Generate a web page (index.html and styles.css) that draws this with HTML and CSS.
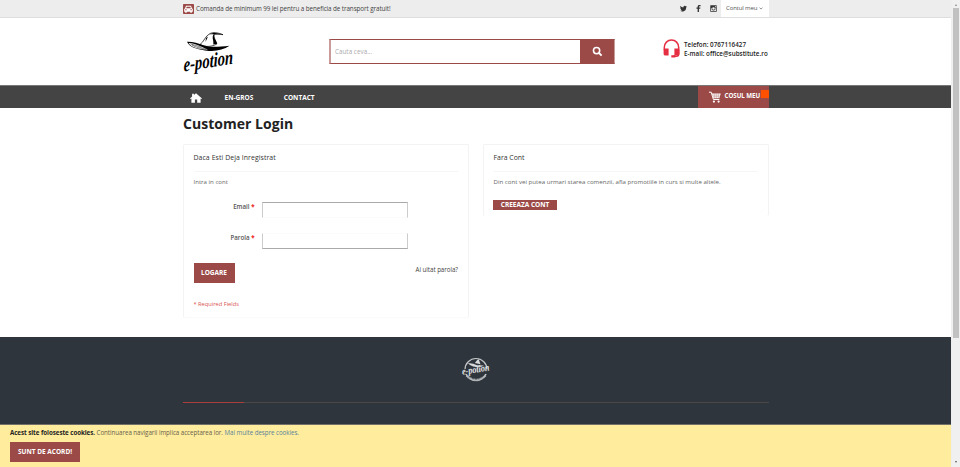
FILE: index.html
```html
<!DOCTYPE html>
<html lang="ro">
<head>
<meta charset="utf-8">
<title>Customer Login</title>
<link rel="stylesheet" href="styles.css">
</head>
<body>
<div class="page">
  <div class="topbar"><div class="wrap topbar-in">
    <svg class="car" viewBox="0 0 11 10"><rect width="11" height="10" rx=".7" fill="#9b4a48"/><path d="M1.200 5 2.100 4.200 3 1.800h5l.9 2.400.9.800v2.700H8.800v1H7.300v-1H3.700v1H2.200v-1h-1z" fill="#fff"/><path d="M3.100 4.200 3.700 2.800h3.600l.6 1.400zM2.200 5.300h1.400v.9H2.200zm5.200 0h1.400v.9H7.400z" fill="#9b4a48"/></svg>
    <span class="promo">Comanda de minimum 99 lei pentru a beneficia de transport gratuit!</span>
    <div class="social">
      <svg viewBox="0 0 24 24"><path d="M23.600 4.900a10 10 0 0 1-2.800.8 4.800 4.800 0 0 0 2.100-2.700 10 10 0 0 1-3 1.200 4.900 4.900 0 0 0-8.400 4.400A13.900 13.900 0 0 1 1.400 3.500a4.900 4.900 0 0 0 1.500 6.600 5 5 0 0 1-2.200-.6 4.900 4.900 0 0 0 3.900 4.900 5 5 0 0 1-2.200.1 4.900 4.900 0 0 0 4.600 3.400A9.900 9.900 0 0 1 0 20a14 14 0 0 0 21.500-12.400 10 10 0 0 0 2.100-2.700z"/></svg>
      <svg viewBox="0 0 24 24"><path d="M9 24V13H5V8.800H9V6c0-4 2.200-6 5.700-6H19v4h-3.300c-1.700 0-2.100.8-2.100 2v2.800h4.800l-.6 4.200h-4.200v11z"/></svg>
      <svg viewBox="0 0 24 24"><path fill-rule="evenodd" d="M2 1h20q1 0 1 1v20q0 1-1 1H2q-1 0-1-1V2q0-1 1-1zm15 3v4h4V4zM3.500 10.500V20.500h17V10.500h-2.200a6.500 6.500 0 1 1-12.600 0zM12 7.500a4.500 4.500 0 1 0 0 9 4.500 4.500 0 0 0 0-9z"/></svg>
    </div>
    <div class="account">Contul meu <svg viewBox="0 0 6 4"><path d="M.8.8 3 2.800 5.200.8" fill="none" stroke="#777" stroke-width="1.200"/></svg></div>
  </div></div>

  <header class="wrap header">
    <svg class="logo" viewBox="0 0 52 44">
      <path d="M17 12.500C21 10 22 4 27 1.500c3-1.500 8-1 13 1.200-4-1-7.500-.9-8.800-.2-.7 3.300 1.700 6.200 2.700 9.500-5 2.700-11 3.500-16.900.5z" fill="#fff" stroke="#000" stroke-width=".7"/>
      <path d="M30.500 2.500c-2 3 .5 6-.2 10l3.800-.8C33 8 30 5.500 31.200 2.500zM26 2.200l5-1.500 8 1.700-8-.2zM25 4.500l-2.500 5.500.5-4z" fill="#000"/>
      <path d="M4 9.800C9 9.500 15 11.200 21 13.400c5 1.800 13 1.700 25.500.4C41 17.300 34 19.500 26 18.900 15 18 6.500 15.500 4 9.800z" fill="#000"/>
      <path d="M5.500 10.900c4 .2 8 1.400 12 3.300 3 1.500 4.500 2.300 7.500 3.200C17.500 17.300 8.500 16 5.500 10.900z" fill="#fff"/>
      <path d="M9 13c4 2.500 9 3.300 14 4M7.500 12c4 1 8 2 11 3.500" fill="none" stroke="#000" stroke-width=".5"/>
      <text transform="translate(.8 39.500) rotate(-9) skewX(-8)" font-size="20" textLength="50" lengthAdjust="spacingAndGlyphs" class="script">e-potion</text>
    </svg>
    <form class="search"><input placeholder="Cauta ceva..." aria-label="Cauta"><span class="search-btn"><svg viewBox="0 0 12 12"><circle cx="5" cy="5" r="3.400" fill="none" stroke="#fff" stroke-width="1.700"/><path d="m7.500 7.500 3 3" stroke="#fff" stroke-width="2.200"/></svg></span></form>
    <div class="contact">
      <svg viewBox="0 0 17 19"><path d="M1.300 11V8.600C1.300 4 4.500 1.100 8.500 1.100s7.200 2.900 7.200 7.500V15q0 2.200-2.200 2.200H10" fill="none" stroke="#e62e42" stroke-width="1.500"/><path d="M.6 11q0-1.400 1.400-1.400h3.600v7H2.500Q.6 16.600.6 15zM11.400 9.600H15q1.400 0 1.400 1.400v4q0 1.600-1.900 1.600h-3.100zM8.300 16.200h4v2.200h-4z" fill="#e62e42"/></svg>
      <div>Telefon: 0767116427<br>E-mail: office@substitute.ro</div>
    </div>
  </header>

  <nav class="nav"><div class="wrap nav-in">
    <svg class="home" viewBox="0 0 12 10"><path d="M6 .2 12 5.500l-.6.6-.8-.5V9.800H7.200V6.500H4.900v3.300H1.400V5.600l-.7.500L0 5.500 2.100 3.500V.8h1.800v1.200z" fill="#fff"/></svg>
    <a class="gros">EN-GROS</a><a class="ct">CONTACT</a>
    <div class="cart"><svg viewBox="0 0 12 12"><path d="M0 1.200h2.200L4.400 8.500h6" fill="none" stroke="#fff" stroke-width="1"/><path d="M2.700 2.500h9L10.400 7.200H4.200z" fill="#fff"/><path d="M3 4.100h8M3.600 5.700h7M5.300 2.500v4.700M7.300 2.500v4.700M9.300 2.500v4.700" stroke="#9b4a48" stroke-width=".3"/><circle cx="4.900" cy="10.600" r="1.100" fill="#fff"/><circle cx="9.600" cy="10.600" r="1.100" fill="#fff"/></svg><span>COSUL MEU</span><i class="badge"></i></div>
  </div></nav>

  <main class="wrap main">
    <h1>Customer Login</h1>
    <div class="cards">
      <section class="card login">
        <h2><span class="t-old">Daca Esti Deja Inregistrat</span></h2>
        <p>Intra in cont</p>
        <div class="field email"><label>Email <b>*</b></label><input aria-label="Email"></div>
        <div class="field pass"><label>Parola <b>*</b></label><input type="password" aria-label="Parola"></div>
        <div class="actions"><button class="btn">LOGARE</button><a>Ai uitat parola?</a></div>
        <div class="req">* Required Fields</div>
      </section>
      <section class="card new">
        <h2>Fara Cont</h2>
        <p><span class="t-new">Din cont vei putea urmari starea comenzii, afla promotiile in curs si multe altele.</span></p>
        <a class="create">CREEAZA CONT</a>
      </section>
    </div>
  </main>

  <footer class="footer"><div class="wrap">
    <svg class="seal" viewBox="0 0 28 28"><circle cx="14" cy="13.500" r="11" fill="none" stroke="#c5c8ca" stroke-width="1.200"/><path d="M4.500 19.500q9.500 9 19 0" fill="none" stroke="#a6abaf" stroke-width="2.400" stroke-dasharray="1.200 .5"/><path d="M1 13h26v5H1z" fill="#2f353c"/><path d="M6 7q6 .5 9 2.200l7 .2q-3 2-8 1.600-6-.8-8-4zM13 7q2-4 5-3.800l-1 1 1.500 4z" fill="#d8dadb"/><text transform="translate(.5 18.800) rotate(-9)" font-size="10" textLength="27.500" lengthAdjust="spacingAndGlyphs" class="script light">e-potion</text></svg>
    <div class="rule"><span></span></div>
  </div></footer>

  <div class="cookie">
    <div class="cookie-text"><b>Acest site foloseste cookies.</b> <span>Continuarea navigarii implica acceptarea lor.</span> <a>Mai multe despre cookies.</a></div>
    <button class="btn">SUNT DE ACORD!</button>
  </div>
</div>
<div class="scroll"><span class="arrow up"></span><span class="thumb"></span><span class="arrow down"></span></div>
</body>
</html>
```

FILE: styles.css
```css
* { box-sizing: border-box; }
body { margin: 0; display: flex; height: 467px; overflow: hidden; background: #fff; color: #555; font: 6.2px/9px "Open Sans", sans-serif; }
svg { display: block; flex: none; }
.page { width: 952px; height: 467px; display: flex; flex-direction: column; border-right: 1px solid #eee; }
.wrap { width: 586px; margin-left: 183px; }
.topbar { height: 18px; background: #ededed; border-bottom: 1px solid #dedede; }
.topbar-in { display: flex; align-items: center; height: 17px; }
.car { width: 11px; height: 10px; }
.promo { margin: -1px 0 0 2px; font-size: 6.300px; letter-spacing: -.09px; color: #444; white-space: nowrap; }
.social { margin-left: auto; display: flex; gap: 8px; margin-right: 4.500px; }
.social svg { width: 7px; height: 7px; fill: #333; }
.account { width: 48px; height: 17px; background: #fff; display: flex; align-items: center; padding-left: 5px; gap: 2px; font-size: 6px; letter-spacing: -.12px; color: #555; white-space: nowrap; }
.account svg { width: 4px; height: 3px; }
.header { height: 67px; display: flex; flex: none; }
.logo { width: 52px; height: 44px; margin-top: 14px; overflow: visible; }
.script { font-family: "Liberation Serif", serif; font-style: italic; font-weight: bold; fill: #000; }
.light { fill: #e4e5e6; }
.search { display: flex; width: 286px; height: 25px; margin: 21px 0 0 94px; border: 1px solid #9b4a48; border-left: 2px solid #c99b9a; border-right-color: #c99b9a; }
.search input { width: 249px; height: 23px; border: 0; padding: 0 0 0 4px; font: 6.200px "Open Sans", sans-serif; letter-spacing: .08px; outline: 0; }
.search input::placeholder { color: #aaa; }
.search-btn { flex: 1; background: #9b4a48; display: grid; place-items: center; }
.search-btn svg { width: 11px; height: 11px; }
.contact { display: flex; margin: 21px 0 0 48px; color: #222; font-weight: 600; font-size: 6.250px; letter-spacing: .02px; white-space: nowrap; }
.contact svg { width: 17px; height: 19px; margin-right: 4px; }
.contact div { padding-top: 1px; }
.nav { height: 23px; flex: none; background: #444; border-top: 1px solid #777; color: #fff; font-weight: 700; font-size: 6.500px; }
.nav-in { display: flex; align-items: center; height: 22px; }
.home { width: 12px; height: 10px; margin: 2px 22.500px 0 7px; }
.ct { margin-left: 30.500px; }
.cart { position: relative; margin-left: auto; width: 71px; height: 22px; background: #9b4a48; display: flex; align-items: center; padding-left: 11px; }
.cart svg { width: 12px; height: 12px; margin-right: 3.500px; }
.cart span { margin-top: -3px; font-size: 6.200px; letter-spacing: -.04px; white-space: nowrap; }
.badge { position: absolute; right: 0; top: 4px; width: 8px; height: 8px; background: #ff5000; }
.main { height: 229px; flex: none; }
h1 { margin: 0; padding-top: 6px; height: 36px; color: #222; font: 700 14px/20px "Open Sans", sans-serif; letter-spacing: .03px; }
.cards { display: flex; gap: 14.500px; align-items: flex-start; }
.card { width: 285.500px; border: 1px solid #f3f3f3; padding: 0 9.500px; border-radius: 2px; }
.login { height: 174px; border-bottom-color: #fafafa; }
.new { height: 72px; border-bottom: 0; }
h2 { margin: 0; height: 27px; border-bottom: 1px solid #f6f6f6; color: #333; font: 400 6.900px/26px "Open Sans", sans-serif; white-space: nowrap; }
.t-old { letter-spacing: .08px; }
p { margin: 0; height: 20px; font-size: 6.100px; line-height: 20px; color: #666; white-space: nowrap; }
.t-new { letter-spacing: .01px; }
.field { display: flex; height: 16px; }
.field label { width: 61px; margin-right: 7.500px; text-align: right; font-weight: 600; font-size: 6.200px; }
.field b { color: #e33; }
.field input { width: 146px; height: 16px; border: 1px solid #ccc; padding: 0 4px; outline: 0; }
.email { margin-top: 10px; }
.email input { border-top-color: #aaa; border-bottom-color: #fbfbfb; }
.pass { margin-top: 15px; }
.pass input { border-top-color: #fbfbfb; border-bottom-color: #aaa; }
.actions { display: flex; justify-content: space-between; margin-top: 14px; color: #444; font-size: 6.200px; letter-spacing: -.04px; line-height: 13px; }
.btn { width: 41px; height: 20px; border: 0; padding: 0; background: #9b4a48; color: #fff; font: 700 6.500px/20px "Open Sans", sans-serif; white-space: nowrap; }
.req { margin-top: 17px; color: #d9534f; font-size: 5.700px; }
.create { display: block; width: 64px; height: 10px; margin: 8px 0 0 -.5px; background: #9b4a48; color: #fff; font-weight: 700; font-size: 6.500px; text-align: center; }
.footer { height: 88px; flex: none; background: #2f353c; border-bottom: 1px solid #73706a; }
.seal { width: 28px; height: 28px; margin: 0 auto; position: relative; top: 19px; overflow: visible; }
.rule { height: 1px; margin-top: 37px; background: #4b4747; }
.rule span { display: block; width: 61px; height: 1px; background: #a93e3d; }
.cookie { height: 42px; background: #ffec9c; padding: 3px 10px; color: #66604d; font-size: 6.200px; letter-spacing: -.04px; }
.cookie b { color: #222; }
.cookie a { color: #57839b; }
.cookie .btn { width: 70px; margin-top: 5px; display: block; }
.scroll { width: 8px; height: 467px; background: #f0f0f0; display: flex; flex-direction: column; align-items: center; }
.arrow { border: 1.500px solid transparent; }
.up { border-bottom: 2px solid #888; border-top: 0; margin: 4px 0 2px; }
.thumb { width: 6px; height: 330px; background: #c1c1c1; }
.down { border-top: 2px solid #555; border-bottom: 0; margin-top: auto; margin-bottom: 4px; }
```
